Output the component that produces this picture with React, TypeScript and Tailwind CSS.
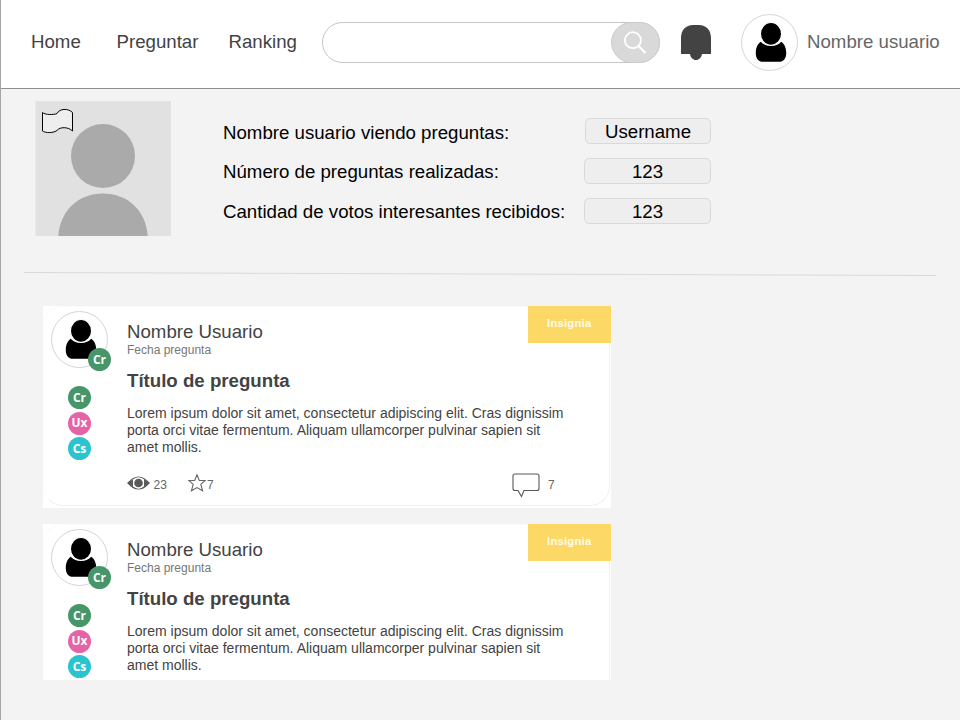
import React from "react";

function Person({ className }: { className: string }) {
  return (
    <svg className={className} viewBox="0 0 57 57" fill="none">
      <circle cx="28.5" cy="28.5" r="28" fill="#fff" stroke="#d5d5d5" />
      <path
        d="M19.8 27.8C16 30.500 14.800 34.500 14.800 39C14.800 44.500 17.500 47.800 22 47.800H38C42.500 47.800 45.200 44.500 45.200 39C45.200 34.500 44 30.500 40.200 27.800C37.500 30.800 34 31.900 30 31.900C26 31.900 22.500 30.800 19.800 27.800Z"
        fill="#000"
      />
      <ellipse cx="30" cy="19.900" rx="10.600" ry="11.400" fill="#000" stroke="#fff" strokeWidth="1.200" />
    </svg>
  );
}

function Tag({ label, tone }: { label: string; tone: string }) {
  return (
    <span
      className={
        "flex h-[23px] w-[23px] items-center justify-center rounded-full font-['Open_Sans',sans-serif] text-[12px] leading-none font-bold text-white " +
        tone
      }
    >
      {label}
    </span>
  );
}

function Header() {
  return (
    <header className="flex h-[89px] items-center border-b border-[#8f8f8f] bg-white pb-[3px] pl-[30px] text-[18.67px] leading-5 whitespace-nowrap text-[#434343]">
      <nav className="flex pb-[2px]">
        <a className="w-[85.500px]">Home</a>
        <a className="w-[112px]">Preguntar</a>
        <a className="w-[93.500px]">Ranking</a>
      </nav>
      <div className="flex h-[41px] w-[338px] shrink-0 justify-end rounded-full border border-[#c4c4c4]">
        <span className="-my-px -mr-px flex w-[49px] items-center justify-center rounded-full border border-[#cccccc] bg-[#d9d9d9]">
          <svg className="mr-px mb-px h-6 w-6" viewBox="0 0 24 24" fill="none" stroke="#fff" strokeWidth="1.800">
            <circle cx="9.900" cy="10.200" r="8" />
            <path d="M15.500 16L22.500 23" strokeWidth="2.200" />
          </svg>
        </span>
      </div>
      <svg className="mt-[1px] ml-[21px] h-[36px] w-[30px] shrink-0" viewBox="0 0 30 36" fill="#434343">
        <path d="M0 29V13C0 5 5 0 12 0H18C25 0 30 5 30 13V29H21C20.500 32.500 18 35 15 35C12 35 9.500 32.500 9 29Z" />
      </svg>
      <Person className="ml-[30px] h-[57px] w-[57px] shrink-0" />
      <span className="ml-[9px] pb-[2px] text-[#666666]">Nombre usuario</span>
    </header>
  );
}

function Stat({ label, value, box, pad }: { label: string; value: string; box: string; pad: string }) {
  return (
    <div className="flex h-[26px] w-[488px] items-center justify-between leading-[21px]">
      <span className={pad}>{label}</span>
      <span className={"flex h-[26px] items-center justify-center rounded-[5px] border border-[#d9d9d9] bg-[#eeeeee] " + box}>
        {value}
      </span>
    </div>
  );
}

function Profile() {
  return (
    <section className="flex pt-3 pl-[34px] text-[18.67px] whitespace-nowrap text-black">
      <svg className="h-[135px] w-[136px]" viewBox="0 0 136 135">
        <rect x="0.500" width="135.500" height="135" fill="#e1e1e1" />
        <circle cx="68" cy="55" r="32" fill="#aaaaaa" />
        <path d="M23.300 135C25 110 43 92.500 68 92.500C93 92.500 111 110 112.700 135Z" fill="#aaaaaa" />
        <path
          d="M7.500 11.500C10 14 19 14 22 12.500C24.500 7.500 33 7 37.500 11.500V30C33 25.500 25 26 22.500 29C19 32.500 10 32 7.500 30Z"
          fill="#eeeeee"
          stroke="#000"
        />
      </svg>
      <div className="flex flex-col gap-3.5 pt-[17px] pl-[52px]">
        <Stat label="Nombre usuario viendo preguntas:" value="Username" box="w-[126px]" pad="pt-[2px]" />
        <Stat label="Número de preguntas realizadas:" value="123" box="w-[127px]" pad="pt-0" />
        <Stat label="Cantidad de votos interesantes recibidos:" value="123" box="w-[127px]" pad="pt-0" />
      </div>
    </section>
  );
}

function QuestionFooter() {
  return (
    <div className="mt-[15px] flex h-[26px] items-center text-[12px] leading-4 text-[#666666]">
      <svg className="mb-[3px] h-4 w-[23px]" viewBox="0 0 23 16" fill="none">
        <path d="M1 8C5 3.500 8 2 11.500 2C15 2 18 3.500 22 8C18 12.500 15 14 11.500 14C8 14 5 12.500 1 8Z" stroke="#595959" strokeWidth="1.200" />
        <path d="M0.500 8L6 4.200V11.800ZM22.500 8L17 4.200V11.800Z" fill="#595959" />
        <circle cx="11.500" cy="8" r="5.600" fill="#fff" />
        <circle cx="11.500" cy="8" r="4.300" fill="#595959" />
      </svg>
      <span className="ml-[3.500px] w-[34.500px] pt-px">23</span>
      <svg className="mb-[3px] h-[18px] w-[18px]" viewBox="0 0 18 18" fill="none" stroke="#666" strokeWidth="1.100">
        <path d="M9 0.800L11.300 6.500H17.300L12.800 10.400L14.600 16.800L9 13.600L3.400 16.800L5.200 10.400L0.700 6.500H6.700Z" />
      </svg>
      <span className="ml-[1px] w-[305px] pt-px">7</span>
      <svg className="mt-[2px] h-[25px] w-7 shrink-0" viewBox="0 0 28 25" fill="none" stroke="#595959" strokeWidth="1.100">
        <path d="M3 1H25Q27 1 27 3V15.500Q27 17.500 25 17.500H12L9.500 23.500L6 17.500H3Q1 17.500 1 15.500V3Q1 1 3 1Z" />
      </svg>
      <span className="ml-2 pt-px">7</span>
    </div>
  );
}

function Question({ height, footer }: { height: string; footer: boolean }) {
  return (
    <article className={"relative w-[568px] overflow-hidden bg-white text-[#434343] " + height}>
      <div className="absolute top-0 left-0 h-[200px] w-[567px] rounded-[20px] border border-[#f1f1f1] border-t-[#fafafa] border-l-[#fafafa]" />
      <div className="relative flex">
        <aside className="w-[84px] shrink-0 pt-[5.500px] pl-2">
          <div className="relative h-[57px] w-[57px]">
            <Person className="h-[57px] w-[57px]" />
            <div className="absolute top-[37px] left-[37px]">
              <Tag label="Cr" tone="bg-[#479669]" />
            </div>
          </div>
          <div className="mt-[18px] ml-[17px] flex flex-col gap-[2.500px]">
            <Tag label="Cr" tone="bg-[#479669]" />
            <Tag label="Ux" tone="bg-[#e563a6]" />
            <Tag label="Cs" tone="bg-[#2bc4ce]" />
          </div>
        </aside>
        <div className="w-[484px] whitespace-nowrap">
          <div className="flex h-[64.500px] justify-between">
            <div className="pt-[16.500px]">
              <div className="text-[18.67px] leading-5">Nombre Usuario</div>
              <div className="text-[12px] leading-4 text-[#777777]">Fecha pregunta</div>
            </div>
            <div className="flex h-[37.500px] w-[83.500px] items-center justify-center bg-[#fcd966] pb-[2px] text-[11.300px] font-bold tracking-[0.200px] text-[#fffbe8]">
              Insignia
            </div>
          </div>
          <h2 className="text-[18.67px] leading-[22px] font-bold">Título de pregunta</h2>
          <p className="mt-[13px] text-[14px] leading-[17px]">
            Lorem ipsum dolor sit amet, consectetur adipiscing elit. Cras dignissim
            <br />
            porta orci vitae fermentum. Aliquam ullamcorper pulvinar sapien sit
            <br />
            amet mollis.
          </p>
          {footer && <QuestionFooter />}
        </div>
      </div>
    </article>
  );
}

export default function App() {
  return (
    <div className="h-[720px] w-[960px] overflow-hidden border-l border-[#a6a6a6] bg-[#f3f3f3] font-['Liberation_Sans',Arial,sans-serif]">
      <Header />
      <Profile />
      <svg className="mt-[35px] ml-[23px] h-[6px] w-[913px]" viewBox="0 0 913 6">
        <path d="M0 1.500L912 4.500" stroke="#d9d9d9" />
      </svg>
      <main className="mt-[28.500px] ml-[42px] flex flex-col gap-[15.500px]">
        <Question height="h-[202.500px]" footer />
        <Question height="h-[156.500px]" footer={false} />
      </main>
    </div>
  );
}
